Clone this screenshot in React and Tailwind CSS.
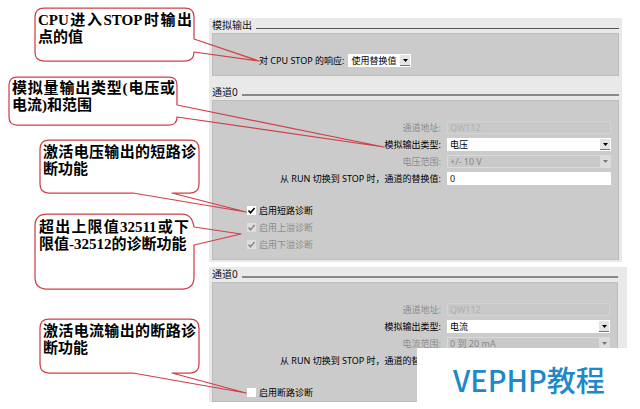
import React, { useId, useState } from "react";

const SANS = "font-['Noto_Sans','Noto_Sans_CJK_SC',sans-serif]";
const SERIF = "font-['Liberation_Serif','Noto_Sans_CJK_SC',serif]";

/* Speech bubble: the text flows, the outline with its pointer is drawn behind it. */
function Callout({ className, outline, children }) {
  return (
    <div className={`relative ${className}`}>
      <svg
        className="pointer-events-none absolute inset-0 h-full w-full overflow-visible"
        fill="none"
        stroke="#cf4047"
        strokeWidth="1.25"
        strokeLinejoin="round"
        aria-hidden="true"
      >
        <path d={outline} />
      </svg>
      <p className="relative text-justify">{children}</p>
    </div>
  );
}

function Heading({ children, thin }) {
  return (
    <div className="flex h-[15px] items-end gap-1">
      <h2 className="text-[10px] leading-[15px] text-[#111]">{children}</h2>
      <div className={thin ? "mb-1 h-px flex-1 bg-[#555]" : "mb-1 h-[2px] flex-1 bg-[#888]"} />
    </div>
  );
}

function Arrow() {
  return (
    <svg viewBox="0 0 5 3" className="h-[3px] w-[5px]" fill="currentColor" aria-hidden="true">
      <path d="M0 0h5L2.5 3z" />
    </svg>
  );
}

function Picker({ id, options, disabled }) {
  return (
    <div className="relative w-full">
      <select
        id={id}
        disabled={disabled}
        className="block h-[13px] w-full appearance-none bg-white pr-3 pl-[3px] text-[9px] leading-[13px] text-black opacity-100 disabled:border disabled:border-[#dadada] disabled:bg-[#c9c9c9] disabled:pl-[2px] disabled:leading-[11px] disabled:text-[#888]"
      >
        {options.map((o) => (
          <option key={o}>{o}</option>
        ))}
      </select>
      <span
        className={`pointer-events-none absolute top-px right-px flex h-[11px] w-[10px] items-center justify-center ${
          disabled ? "bg-[#dcdcdc] text-[#777]" : "border-b border-[#777] bg-[#e4e4e4] text-black"
        }`}
      >
        <Arrow />
      </span>
    </div>
  );
}

function Row({ label, id, muted, children }) {
  return (
    <div className="flex h-[13px] items-center gap-[6px]">
      <label
        htmlFor={id}
        className={`w-[228px] shrink-0 text-right text-[9px] leading-[13px] whitespace-nowrap ${
          muted ? "text-[#8b8b8b]" : "text-black"
        }`}
      >
        {label}
      </label>
      {children}
    </div>
  );
}

function Check({ label, checked: initial, disabled }) {
  const [checked, setChecked] = useState(Boolean(initial));
  return (
    <label
      className={`flex h-[13px] items-center gap-[3px] text-[9px] leading-[13px] ${
        disabled ? "text-[#8b8b8b]" : "text-black"
      }`}
    >
      <span className="relative block size-[9px]">
        <input
          type="checkbox"
          checked={checked}
          disabled={disabled}
          onChange={(e) => setChecked(e.target.checked)}
          className="block size-[9px] appearance-none bg-white disabled:bg-[#dedede]"
        />
        {checked && (
          <svg
            viewBox="0 0 9 9"
            className="pointer-events-none absolute inset-0 size-[9px]"
            fill="none"
            stroke="currentColor"
            strokeWidth="1.6"
            aria-hidden="true"
          >
            <path d="M1.5 4.5l2 2.2L7.6 2" />
          </svg>
        )}
      </span>
      {label}
    </label>
  );
}

function Channel({ type, rangeLabel, range, checks, className }) {
  const id = useId();
  return (
    <div className={`border border-[#bdbdbd] bg-[#cbcbcb] pt-5 pr-[7px] ${className}`}>
      <div className="flex flex-col gap-1">
        <Row id={`${id}-addr`} label="通道地址:" muted>
          <input
            id={`${id}-addr`}
            disabled
            defaultValue="QW112"
            className="h-[13px] w-full min-w-0 flex-1 border border-[#d4d4d4] bg-[#c9c9c9] px-[2px] text-[9px] leading-[11px] text-[#b0b0b0]"
          />
        </Row>
        <Row id={`${id}-type`} label="模拟输出类型:">
          <Picker id={`${id}-type`} options={type} />
        </Row>
        <Row id={`${id}-range`} label={rangeLabel} muted>
          <Picker id={`${id}-range`} options={range} disabled />
        </Row>
        <Row id={`${id}-sub`} label="从 RUN 切换到 STOP 时，通道的替换值:">
          <input
            id={`${id}-sub`}
            defaultValue="0"
            className="h-[13px] w-full min-w-0 flex-1 bg-white px-[3px] text-[9px] leading-[13px] text-[#222]"
          />
        </Row>
      </div>
      <div className="mt-[19px] flex flex-col gap-1 pl-[34px]">
        {checks.map((c) => (
          <Check key={c.label} {...c} />
        ))}
      </div>
    </div>
  );
}

export default function App() {
  return (
    <main className={`relative flex min-h-screen w-full bg-white ${SANS}`}>
      <aside
        className={`relative z-10 flex w-[209px] shrink-0 flex-col text-[15px] leading-[17px] font-bold text-black ${SERIF}`}
      >
        <Callout
          className="mt-2 ml-[35px] h-[53px] w-[159px] pt-1 pr-[2px] pl-[3px]"
          outline="M9 0H150Q159 0 159 9V31L224 53L159 44Q159 53 150 53H9Q0 53 0 44V9Q0 0 9 0Z"
        >
          CPU进入STOP时输出点的值
        </Callout>
        <Callout
          className="mt-4 ml-[9px] h-12 w-[168px] pt-[3px] pr-[2px] pl-[3px]"
          outline="M8 0H160Q168 0 168 8V28L375 70L168 40Q168 48 160 48H8Q0 48 0 40V8Q0 0 8 0Z"
        >
          模拟量输出类型(电压或电流)和范围
        </Callout>
        <Callout
          className="mt-[15px] ml-10 h-[53px] w-[159px] pt-1 pr-[3px] pl-[3px]"
          outline="M9 0H150Q159 0 159 9V44Q159 53 150 53H132L206 72L93 53H9Q0 53 0 44V9Q0 0 9 0Z"
        >
          激活电压输出的短路诊断功能
        </Callout>
        <Callout
          className="mt-[21px] ml-[35px] h-[75px] w-[159px] pt-[5px] pr-[5px] pl-1"
          outline="M12 0H147Q157 0 159 13L206 20L159 31V63Q159 75 147 75H12Q0 75 0 63V12Q0 0 12 0Z"
        >
          超出上限值32511或下限值-32512的诊断功能
        </Callout>
        <Callout
          className="mt-[30px] ml-10 h-[54px] w-[159px] pt-1 pr-[3px] pl-[3px]"
          outline="M9 0H150Q159 0 159 9V45Q159 54 150 54H132L206 74L93 54H9Q0 54 0 45V9Q0 0 9 0Z"
        >
          激活电流输出的断路诊断功能
        </Callout>
      </aside>

      <div className="flex min-w-0 flex-1 flex-col gap-[5px] pt-[18px] pr-[13px]">
        <section className="mr-[5px] bg-[#e9e9e9] pr-[3px] pb-[2px] pl-[3px]">
          <Heading thin>模拟输出</Heading>
          <div className="flex h-[43px] items-center gap-1 border border-[#bdbdbd] bg-[#cbcbcb] pt-3 pl-[46px]">
            <label htmlFor="stop-response" className="text-[9px] leading-[13px] whitespace-nowrap text-black">
              对 CPU STOP 的响应:
            </label>
            <div className="w-[63px]">
              <Picker id="stop-response" options={["使用替换值", "保持上一个值"]} />
            </div>
          </div>
          <div className="mt-[9px]">
            <Heading>通道0</Heading>
          </div>
          <Channel
            className="pb-[8px]"
            type={["电压", "电流"]}
            rangeLabel="电压范围:"
            range={["+/- 10 V"]}
            checks={[
              { label: "启用短路诊断", checked: true },
              { label: "启用上溢诊断", checked: true, disabled: true },
              { label: "启用下溢诊断", checked: true, disabled: true },
            ]}
          />
        </section>

        <section className="bg-[#e9e9e9] pr-[9px] pl-[3px]">
          <Heading>通道0</Heading>
          <Channel
            className="pb-[2px]"
            type={["电流", "电压"]}
            rangeLabel="电流范围:"
            range={["0 到 20 mA"]}
            checks={[{ label: "启用断路诊断" }]}
          />
        </section>
      </div>

      <div className="absolute right-0 bottom-0 z-20 flex h-[61px] w-[223px] items-center bg-white pl-9 font-['Noto_Sans_CJK_SC',sans-serif] text-[29px] leading-[30px] font-medium whitespace-nowrap text-[#1e88c9]">
        VEPHP教程
      </div>
    </main>
  );
}
